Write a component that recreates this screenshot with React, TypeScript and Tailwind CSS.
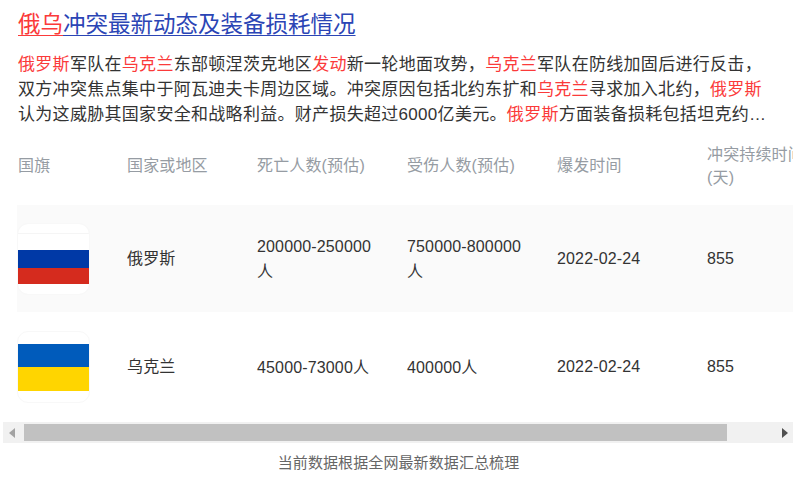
import React from 'react';

const rows = [
  { name: '俄罗斯', dead: '200000-250000人', hurt: '750000-800000人', flag: 'ru' },
  { name: '乌克兰', dead: '45000-73000人', hurt: '400000人', flag: 'ua' },
];

const Red = ({ children }: { children: React.ReactNode }) => <span className="text-[#fb3a3a]">{children}</span>;

const Flag = ({ kind }: { kind: string }) => (
  <div className="flex h-[70px] w-[71px] flex-col justify-center overflow-hidden rounded-[10px] bg-white outline outline-[#f8f8f8]">
    {kind === 'ru' ? (
      <>
        <div className="h-[17px] border-t border-[#f5f5f5] bg-white" />
        <div className="h-[18px] bg-[#0039a6]" />
        <div className="h-[16px] bg-[#d52b1e]" />
      </>
    ) : (
      <>
        <div className="h-[23px] bg-[#005bbb]" />
        <div className="h-[24px] bg-[#ffd500]" />
      </>
    )}
  </div>
);

const App = () => {
  return (
    <div className="h-[492px] w-[799px] overflow-hidden bg-white font-['Liberation_Sans','Noto_Sans_CJK_SC',sans-serif] text-[#333]">
      <div className="pt-[9px] pr-[6px] pl-[18px]">
        <h1 className="text-[22.5px] leading-[32px] font-normal">
          <span className="text-[#fb3a3a] underline decoration-1 underline-offset-[3px]">俄乌</span>
          <span className="text-[#2b45b5] underline decoration-1 underline-offset-[3px]">冲突最新动态及装备损耗情况</span>
        </h1>
        <p className="mt-[11px] text-[17px] leading-[25px] tracking-[0.3px]">
          <Red>俄罗斯</Red>军队在<Red>乌克兰</Red>东部顿涅茨克地区<Red>发动</Red>新一轮地面攻势，<Red>乌克兰</Red>军队在防线加固后进行反击，
          <br />
          双方冲突焦点集中于阿瓦迪夫卡周边区域。冲突原因包括北约东扩和<Red>乌克兰</Red>寻求加入北约，<Red>俄罗斯</Red>
          <br />
          认为这威胁其国家安全和战略利益。财产损失超过6000亿美元。<Red>俄罗斯</Red>方面装备损耗包括坦克约…
        </p>
      </div>

      <div className="mt-[6px] ml-[3px] w-[790px]">
        <div className="overflow-hidden pl-[14px]">
          <table className="w-[796px] table-fixed border-collapse text-left text-[16px] tracking-[0.15px]">
            <thead>
              <tr className="h-[72px] text-[#969ca3]">
                <th className="w-[110px] pb-[6px] pl-[1px] font-normal">国旗</th>
                <th className="w-[130px] pb-[6px] font-normal">国家或地区</th>
                <th className="w-[150px] pb-[6px] font-normal">死亡人数(预估)</th>
                <th className="w-[150px] pb-[6px] font-normal">受伤人数(预估)</th>
                <th className="w-[150px] pb-[6px] font-normal">爆发时间</th>
                <th className="w-[106px] pr-[6px] pb-[6px] leading-[23px] font-normal">冲突持续时间(天)</th>
              </tr>
            </thead>
            <tbody>
              {rows.map((r, i) => (
                <tr key={r.name} className={i === 0 ? 'h-[107px] bg-[#fafafa]' : 'h-[110px]'}>
                  <td className="pl-[1px]">
                    <Flag kind={r.flag} />
                  </td>
                  <td>{r.name}</td>
                  <td className="pr-[30px] leading-[25px]">{r.dead}</td>
                  <td className="pr-[30px] leading-[25px]">{r.hurt}</td>
                  <td>2022-02-24</td>
                  <td>855</td>
                </tr>
              ))}
            </tbody>
          </table>
        </div>

        <div className="flex h-[21px] items-center bg-[#f1f1f1]">
          <div className="flex w-[21px] justify-center pr-[3px]">
            <svg width="6" height="10" viewBox="0 0 6 10">
              <path d="M6 0v10L0 5z" fill="#a3a3a3" />
            </svg>
          </div>
          <div className="h-[17px] w-[703px] bg-[#c1c1c1]" />
          <div className="flex flex-1 justify-end pr-[5px]">
            <svg width="6" height="10" viewBox="0 0 6 10">
              <path d="M0 0v10l6-5z" fill="#505050" />
            </svg>
          </div>
        </div>
      </div>

      <p className="mt-[10px] pr-[2px] text-center text-[15px] leading-[20px] tracking-[0.1px] text-[#666]">当前数据根据全网最新数据汇总梳理</p>
    </div>
  );
};

export default App;
